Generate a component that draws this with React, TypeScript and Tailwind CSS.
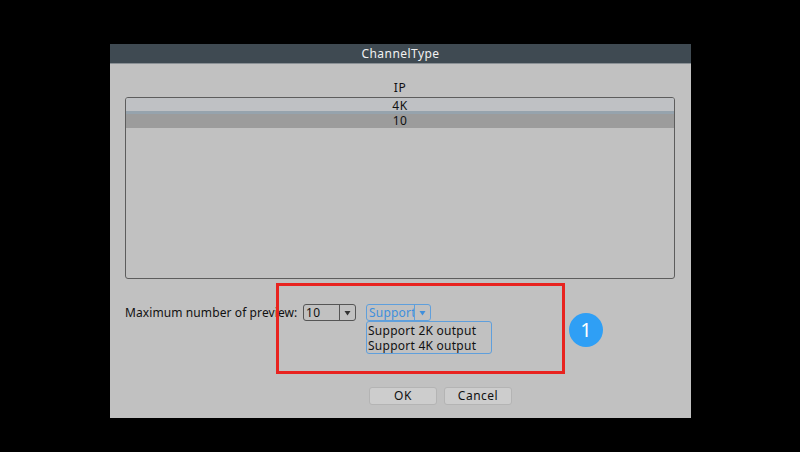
import React from 'react';

const Caret = () => (
  <svg width="7" height="6" viewBox="0 0 7 6">
    <path d="M0.5 1h6L3.5 5.5z" fill="currentColor" />
  </svg>
);

export default function App() {
  return (
    <div className="relative w-[800px] h-[452px] overflow-hidden bg-black pt-[44px] pl-[110px] font-['Noto_Sans',sans-serif] text-[12px] text-[#111111]">
      <div className="flex flex-col w-[581px] h-[374px] bg-[#c1c1c1]">
        <div className="flex items-center justify-center h-[20px] shrink-0 bg-[#3f4a52] text-[#f2f2f2] tracking-[0.45px] border-b border-[#8a9095]">
          ChannelType
        </div>

        <div className="flex flex-col flex-1 pl-[15px] pr-[16px]">
          <div className="flex items-center justify-center h-[33px] pt-[14px] shrink-0 tracking-[0.5px]">IP</div>

          <div className="flex flex-col h-[182px] shrink-0 rounded-[3px] border border-[#5d5d5d] overflow-hidden">
            <div className="flex items-center justify-center h-[13px] pt-[3px] leading-[10px] bg-[#bfc1c4] tracking-[0.5px]">4K</div>
            <div className="h-[3px] bg-[#96a3ad]" />
            <div className="flex items-center justify-center h-[14px] leading-[14px] bg-[#9c9c9c] tracking-[0.5px]">10</div>
          </div>

          <div className="flex items-center h-[17px] mt-[25px] shrink-0">
            <span className="w-[178px] tracking-[0.1px] whitespace-nowrap">Maximum number of preview:</span>
            <div className="flex w-[53px] h-[17px] rounded-[3px] border border-[#555] tracking-[0.4px]">
              <span className="flex-1 pl-[2px] leading-[16px]">10</span>
              <span className="flex items-center justify-center w-[16px] border-l border-[#555] text-[#333]">
                <Caret />
              </span>
            </div>
            <div className="relative ml-[10px]">
              <div className="flex w-[65px] h-[17px] rounded-[3px] border border-[#5f9fdc] text-[#3f8fdc] tracking-[0.2px]">
                <span className="w-[48px] overflow-hidden pl-[2px] leading-[16px] border-r border-[#5f9fdc]">Support</span>
                <span className="flex flex-1 items-center justify-center">
                  <Caret />
                </span>
              </div>
              <div className="absolute left-0 top-[17px] flex flex-col justify-center w-[126px] h-[33px] rounded-[3px] border border-[#5f9fdc] pl-[1px] pt-[1px] tracking-[0.25px] whitespace-nowrap leading-[15px]">
                <span>Support 2K output</span>
                <span>Support 4K output</span>
              </div>
            </div>
          </div>

          <div className="flex justify-end gap-[7px] mt-[66px] shrink-0 pr-[163px]">
            <button className="w-[68px] h-[18px] rounded-[3px] border border-[#b4b4b4] bg-[#cdcdcd] tracking-[0.5px] leading-[16px]">OK</button>
            <button className="w-[68px] h-[18px] rounded-[3px] border border-[#b4b4b4] bg-[#cdcdcd] tracking-[0.5px] leading-[16px]">Cancel</button>
          </div>
        </div>
      </div>

      <div className="absolute left-[276px] top-[283px] w-[289px] h-[91px] border-[3px] border-[#e8231f]" />
      <div className="absolute left-[569px] top-[313px] flex items-center justify-center w-[34px] h-[34px] rounded-full bg-[#2f9ff5] text-white text-[20px] font-normal">
        1
      </div>
    </div>
  );
}
